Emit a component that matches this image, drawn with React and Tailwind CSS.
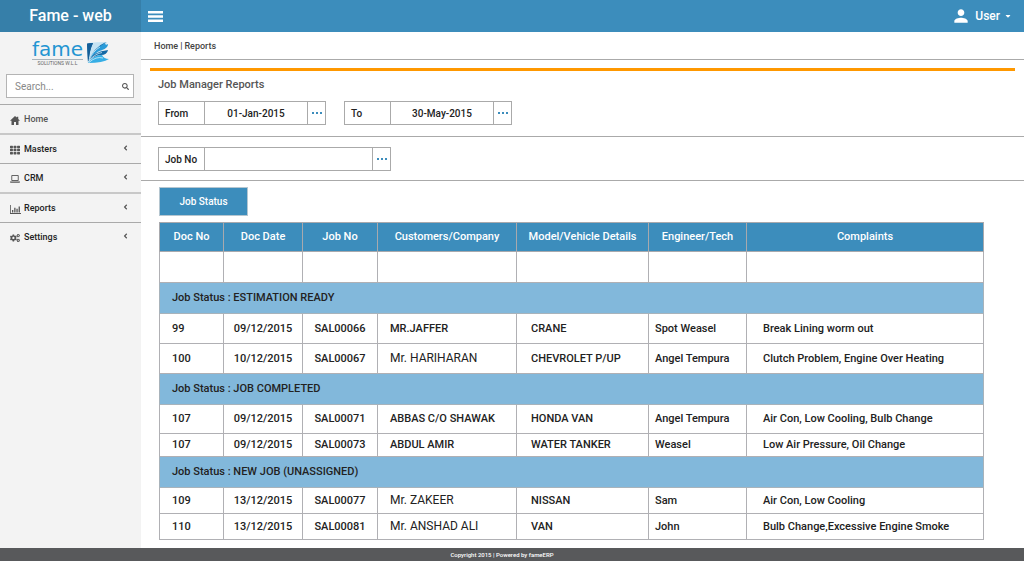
import React, { useState } from 'react'
import { FaTh, FaCogs, FaSearch, FaAngleLeft, FaCaretDown } from 'react-icons/fa'
import { MdPerson } from 'react-icons/md'

function HomeIcon() {
  return (
    <svg viewBox="0 0 20 18" className="w-2.5 h-[9px]" fill="currentColor" aria-hidden="true">
      <path d="M10 0L0 9.5h3V18h5v-6h4v6h5V9.5h3L16.5 6V1.5h-3v1.7z" />
    </svg>
  )
}

function LaptopIcon() {
  return (
    <svg viewBox="0 0 20 16" className="w-2.5 h-2" aria-hidden="true">
      <path d="M3.5 1h13v10h-13z" fill="none" stroke="currentColor" strokeWidth="1.8" />
      <path d="M0 13h20v1q0 1.5-1.5 1.5h-17Q0 15.5 0 14z" fill="currentColor" />
    </svg>
  )
}

function ReportsIcon() {
  return (
    <svg viewBox="0 0 11 9" className="w-[11px] h-[9px]" fill="currentColor" aria-hidden="true">
      <path d="M0 0h.8v8.1H11V9H0z" />
      <path d="M2 5h1.3v2.5H2zM4.2 2.8h1.3v4.7H4.2zM6.4 3.8h1.3v3.7H6.4zM8.6 1.4h1.3v6.1H8.6z" />
    </svg>
  )
}

const menu = [
  { name: 'Home', icon: <HomeIcon />, active: true },
  { name: 'Masters', icon: <FaTh className="w-2.5 h-2.5" />, sub: true },
  { name: 'CRM', icon: <LaptopIcon />, sub: true },
  { name: 'Reports', icon: <ReportsIcon />, sub: true },
  { name: 'Settings', icon: <FaCogs className="w-2.5 h-2.5" />, sub: true },
]

const columns = ['Doc No', 'Doc Date', 'Job No', 'Customers/Company', 'Model/Vehicle Details', 'Engineer/Tech', 'Complaints']

const groups = [
  {
    status: 'ESTIMATION READY',
    heights: ['h-[30px]', 'h-[30px]'],
    rows: [
      ['99', '09/12/2015', 'SAL00066', 'MR.JAFFER', 'CRANE', 'Spot Weasel', 'Break Lining worm out'],
      ['100', '10/12/2015', 'SAL00067', 'Mr. HARIHARAN', 'CHEVROLET P/UP', 'Angel Tempura', 'Clutch Problem, Engine Over Heating'],
    ],
  },
  {
    status: 'JOB COMPLETED',
    heights: ['h-[29px]', 'h-[23px]'],
    rows: [
      ['107', '09/12/2015', 'SAL00071', 'ABBAS C/O SHAWAK', 'HONDA VAN', 'Angel Tempura', 'Air Con, Low Cooling, Bulb Change'],
      ['107', '09/12/2015', 'SAL00073', 'ABDUL AMIR', 'WATER TANKER', 'Weasel', 'Low Air Pressure, Oil Change'],
    ],
  },
  {
    status: 'NEW JOB (UNASSIGNED)',
    heights: ['h-[26px]', 'h-[26px]'],
    rows: [
      ['109', '13/12/2015', 'SAL00077', 'Mr. ZAKEER', 'NISSAN', 'Sam', 'Air Con, Low Cooling'],
      ['110', '13/12/2015', 'SAL00081', 'Mr. ANSHAD ALI', 'VAN', 'John', 'Bulb Change,Excessive Engine Smoke'],
    ],
  },
]

const cellStyles = ['pl-3', 'text-center', 'text-center', 'pl-3', 'pl-3.5', 'pl-1.5', 'pl-4']

function Logo() {
  return (
    <div className="flex items-center justify-center gap-1">
      <div className="flex flex-col items-center">
        <span className="font-['DejaVu_Sans',sans-serif] text-xl leading-5 text-[#2395d2] border-b border-[#a9b3b9]">fame</span>
        <span className="text-[5px] leading-[6px] text-[#666]">SOLUTIONS W.L.L</span>
      </div>
      <svg viewBox="0 0 22 22" className="w-[22px] h-[22px]" aria-hidden="true">
        <path d="M1 1Q9 0 20 0Q18 10 1 20z" fill="#c5e3f3" />
        <path d="M0 2Q2 1 6 1Q2 9 2 18Q9 11 19 0Q14 2 9 7Q5 11 1 20z" fill="#176ca7" />
        <path d="M0 1.5L6 1Q4 5 3 10L1 21z" fill="#155f98" />
        <path d="M1 20Q5 8 18 1Q18 4 21 2Q21 6 15 8Q7 10 1 20z" fill="#2a9bd8" />
        <path d="M1 20Q7 9 21 8Q20 13 14 13Q7 13 1 20z" fill="#1469a5" />
        <path d="M1 21Q8 12 15 13Q17 17 22 17Q16 21 1 21z" fill="#36aee5" />
        <path d="M1 20Q7 12 15 10.5M2 18Q6 9 13 5M2 20.5Q9 14 16 16" fill="none" stroke="#eaf6fc" strokeWidth=".7" />
      </svg>
    </div>
  )
}

function LookupField({ id, label, value, onChange, width }) {
  return (
    <div className="flex h-6 border border-[#aaa] text-[10px] font-medium text-[#222]">
      <label htmlFor={id} className="w-[46px] pl-1.5 flex items-center border-r border-[#aaa]">{label}</label>
      <input
        id={id}
        type="text"
        value={value}
        onChange={(e) => onChange(e.target.value)}
        className={`${width} text-center bg-white outline-none`}
      />
      <button
        type="button"
        aria-label={`Choose ${label}`}
        className="w-[18px] flex items-center justify-center gap-0.5 border-l border-[#aaa]"
      >
        <span className="w-0.5 h-0.5 bg-[#3c8dbc]"></span>
        <span className="w-0.5 h-0.5 bg-[#3c8dbc]"></span>
        <span className="w-0.5 h-0.5 bg-[#3c8dbc]"></span>
      </button>
    </div>
  )
}

function Sidebar() {
  return (
    <aside className="w-[141px] shrink-0 bg-[#f3f3f3] pt-[7px]">
      <Logo />
      <div className="ml-1.5 mr-[7px] mt-2 mb-1.5 h-6 flex items-center border border-[#b4b4b4] bg-white px-1">
        <input
          type="text"
          aria-label="Search"
          placeholder="Search..."
          className="min-w-0 flex-1 pl-1 text-[10px] text-[#555] placeholder:text-[#888] outline-none"
        />
        <button type="button" aria-label="Go" className="text-[#555]">
          <FaSearch className="w-[7px] h-[7px]" />
        </button>
      </div>
      <nav>
        {menu.map((item) => (
          <a
            key={item.name}
            href={`#${item.name.toLowerCase()}`}
            className="flex items-center h-[26px] pt-0.5 box-content border-t border-[#a9a9a9] even:border-t-2 even:border-[#c8c8c8] pl-2.5 pr-3 text-[9px] font-medium text-[#222]"
          >
            <span className="w-3.5 text-[#555]">{item.icon}</span>
            <span className={item.active ? 'text-[#555]' : ''}>{item.name}</span>
            {item.sub && <FaAngleLeft className="ml-auto mb-1 w-[7px] h-2 text-[#555]" />}
          </a>
        ))}
      </nav>
    </aside>
  )
}

function JobTable() {
  return (
    <table className="w-full table-fixed border-collapse text-[11px] leading-4 font-medium text-[#222]">
      <colgroup>
        <col className="w-[64px]" />
        <col className="w-[79px]" />
        <col className="w-[75px]" />
        <col className="w-[139px]" />
        <col className="w-[132px]" />
        <col className="w-[98px]" />
        <col />
      </colgroup>
      <thead>
        <tr className="h-[29px] bg-[#3c8dbc] text-white">
          {columns.map((name) => (
            <th key={name} className="border border-[#a8a9ad] p-0 font-medium whitespace-nowrap">{name}</th>
          ))}
        </tr>
      </thead>
      <tbody>
        <tr className="h-[31px]">
          {columns.map((name) => (
            <td key={name} className="border border-[#b0b0b4] p-0"></td>
          ))}
        </tr>
      </tbody>
      {groups.map((group) => (
        <tbody key={group.status}>
          <tr className="h-[31px] bg-[#82b8db]">
            <th colSpan={7} className="border border-[#a8b3bb] py-0 pl-3 text-left font-medium">
              Job Status : {group.status}
            </th>
          </tr>
          {group.rows.map((row, r) => (
            <tr key={row[2]} className={group.heights[r]}>
              {row.map((cell, i) => (
                <td key={i} className={`border border-[#b0b0b4] py-0 whitespace-nowrap ${cellStyles[i]}`}>
                  {cell.startsWith('Mr. ') ? <span className="text-xs font-normal">{cell}</span> : cell}
                </td>
              ))}
            </tr>
          ))}
        </tbody>
      ))}
    </table>
  )
}

function App() {
  const [from, setFrom] = useState('01-Jan-2015')
  const [to, setTo] = useState('30-May-2015')
  const [jobNo, setJobNo] = useState('')

  return (
    <div className="min-h-screen flex flex-col bg-white font-['Roboto',sans-serif]">
      {/* Top bar */}
      <header className="h-8 flex bg-[#3c8dbc] text-white">
        <div className="w-[141px] shrink-0 flex items-center justify-center bg-[#367fa9] text-base font-medium">Fame - web</div>
        <button type="button" aria-label="Toggle menu" className="ml-[7px]">
          <svg viewBox="0 0 15 11" className="w-[15px] h-[11px]" fill="currentColor" aria-hidden="true">
            <path d="M0 0h15v2.4H0zM0 4.3h15v2.4H0zM0 8.6h15V11H0z" />
          </svg>
        </button>
        <button type="button" className="ml-auto mr-3 flex items-center text-xs font-medium">
          <MdPerson className="w-5 h-5 mr-1" />
          User
          <FaCaretDown className="w-2 h-2 ml-1" />
        </button>
      </header>

      <div className="flex flex-1">
        <Sidebar />

        <main className="flex-1 min-w-0 pb-2">
          {/* Breadcrumb */}
          <div className="h-7 px-[13px] pt-0.5 flex items-center gap-0.5 border-b border-[#aaa] text-[9px] font-medium text-[#444]">
            <a href="#home">Home</a>
            <span>|</span>
            <a href="#reports">Reports</a>
          </div>

          <div className="mx-[9px] mt-2 h-[3px] bg-[#ff9800]"></div>

          {/* Filters */}
          <div className="pl-[17px] pt-1.5 pb-[11px] border-b border-[#aaa]">
            <h1 className="mb-2 text-[11px] leading-4 font-medium text-[#555]">Job Manager Reports</h1>
            <div className="flex gap-[18px]">
              <LookupField id="from" label="From" value={from} onChange={setFrom} width="w-[102px]" />
              <LookupField id="to" label="To" value={to} onChange={setTo} width="w-[102px]" />
            </div>
          </div>
          <div className="pl-[17px] pt-2.5 pb-[9px] flex border-b border-[#aaa]">
            <LookupField id="job-no" label="Job No" value={jobNo} onChange={setJobNo} width="w-[167px]" />
          </div>

          <div className="pl-[18px] pr-10 pt-1.5">
            <button type="button" className="mb-1.5 w-[89px] h-[29px] border border-[#b5c6d0] bg-[#3c8dbc] text-[10px] font-medium text-white">
              Job Status
            </button>
            <JobTable />
          </div>
        </main>
      </div>

      <footer className="h-[13px] pr-5 flex items-center justify-center bg-[#58595b] text-[6px] leading-[13px] font-medium text-white">
        Copyright 2015 | Powered by fameERP
      </footer>
    </div>
  )
}

export default App
